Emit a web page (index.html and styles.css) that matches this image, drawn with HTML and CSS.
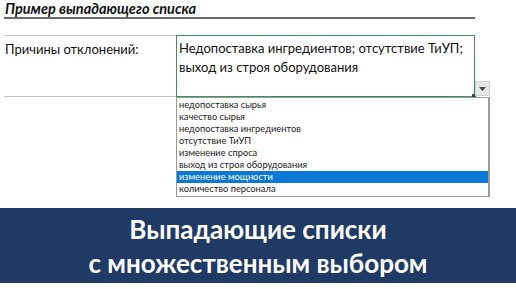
FILE: index.html
```html
<!DOCTYPE html>
<html lang="ru">
<head>
    <meta charset="UTF-8">
    <meta name="viewport" content="width=device-width, initial-scale=1.0">
    <title>Пример выпадающего списка</title>
    <link rel="stylesheet" href="styles.css">
</head>
<body>
    <div class="sheet">
        <div class="title">Пример выпадающего списка</div>
        <div class="row">
            <div class="label">Причины отклонений:</div>
            <div class="cell-wrap">
                <div class="cell">Недопоставка ингредиентов; отсутствие ТиУП; выход из строя оборудования</div>
                <div class="handle"></div>
                <div class="drop-btn">
                    <svg width="7" height="4" viewBox="0 0 7 4"><path d="M0 0h7L3.5 4z" fill="#444"/></svg>
                </div>
                <ul class="list">
                    <li>недопоставка сырья</li>
                    <li>качество сырья</li>
                    <li>недопоставка ингредиентов</li>
                    <li>отсутствие ТиУП</li>
                    <li>изменение спроса</li>
                    <li>выход из строя оборудования</li>
                    <li class="active">изменение мощности</li>
                    <li>количество персонала</li>
                </ul>
            </div>
        </div>
    </div>
    <div class="banner">
        <div>Выпадающие списки</div>
        <div>с множественным выбором</div>
    </div>
</body>
</html>
```

FILE: styles.css
```css
body {
    margin: 0;
    background: #fff;
    font-family: 'Lato', 'Open Sans', sans-serif;
    color: #111;
}
.sheet {
    padding: 0 0 0 4px;
}
.title {
    width: 471px;
    height: 19px;
    border-bottom: 2px solid #6a6a6a;
    margin-bottom: 16px;
    padding: 1px 0 0 1px;
    box-sizing: border-box;
    font-size: 14.5px;
    line-height: 16px;
    font-weight: bold;
    font-style: italic;
}
.row {
    display: flex;
}
.label {
    width: 172px;
    height: 62px;
    border-top: 1px solid #c4c4c4;
    border-bottom: 1px solid #c4c4c4;
    padding: 4px 0 0 1px;
    box-sizing: border-box;
    font-size: 13px;
    line-height: 19px;
}
.cell-wrap {
    position: relative;
}
.cell {
    width: 299px;
    height: 62px;
    border: 1px solid #3f9160;
    box-sizing: border-box;
    padding: 3px 0 0 2px;
    font-size: 13px;
    line-height: 19px;
}
.handle {
    position: absolute;
    left: 296px;
    top: 59px;
    width: 4px;
    height: 4px;
    background: #1d5a36;
}
.drop-btn {
    position: absolute;
    left: 299px;
    top: 46px;
    width: 15px;
    height: 15px;
    background: #e8e8e8;
    border: 1px solid #d0d0d0;
    box-sizing: border-box;
    display: flex;
    justify-content: center;
    align-items: center;
}
.list {
    position: absolute;
    left: 0;
    top: 62px;
    width: 314px;
    margin: 0;
    padding: 1px 0;
    list-style: none;
    background: #fff;
    border: 1px solid #9a9a9a;
    border-right-width: 2px;
    box-sizing: border-box;
    font-size: 9.3px;
}
.list li {
    height: 12px;
    line-height: 12px;
    padding-left: 2px;
    color: #222;
}
.list li.active {
    background: #0a78d4;
    color: #fff;
}
.banner {
    margin-top: 111px;
    height: 75px;
    background: #203a66;
    color: #fff;
    font-family: 'Lato', sans-serif;
    font-weight: bold;
    font-size: 26px;
    line-height: 34px;
    text-align: center;
    padding-top: 4px;
    box-sizing: border-box;
}
```
